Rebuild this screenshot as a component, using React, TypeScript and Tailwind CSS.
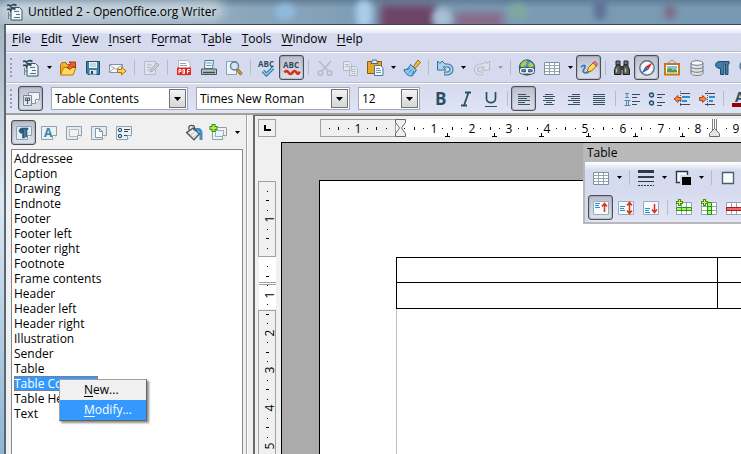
import type { ReactNode } from 'react'
import clsx from 'clsx'

const icons: Record<string, ReactNode> = {
  writer: (
    <>
      <path d="M5 4.500h8.500L16 7v10H5z" fill="#f4f8fb" stroke="#35566d" />
      <path d="M8 8.500h5M8 14.500h6M10 11.500h4" stroke="#4d6e85" />
      <path d="M1 2.500c2-1 3 0 3.500 1C5.500 1.500 8 1 10.500 2.500M1 6.500c2-1 3 0 3.500 1 .5-2 3-2.500 5-1" fill="none" stroke="#2b4658" strokeWidth="1.600" />
      <path d="M2.500 9v7M2 12h4" stroke="#6d8798" />
    </>
  ),
  folder: (
    <>
      <path d="M1.500 15V5.500l1.500-2h4l1 2h7V8" fill="#f0b22c" stroke="#b06a10" />
      <path d="M1.500 16 4.500 8.500H17L14 16z" fill="#ffd95c" stroke="#b8730c" />
      <path d="M8 8.500 12 5 10 3h6.500v6L14.500 7 11 10.500z" fill="#e8652c" stroke="#8c2606" strokeWidth=".8" />
    </>
  ),
  save: (
    <>
      <path d="M2.500 2.500h13v13H4L2.500 14z" fill="#3c82a8" stroke="#1f4964" />
      <path d="M5 3h8v6H5z" fill="#e9f2f7" />
      <path d="M6 5h6M6 7h6" stroke="#9db9c8" />
      <path d="M5.500 11h7v4.500h-7z" fill="#d8e0e5" />
      <path d="M7 12h2v3H7z" fill="#25465b" />
    </>
  ),
  mail: (
    <>
      <path d="M.5 5.500h13v8H.5z" fill="#f7f9fa" stroke="#8494a0" />
      <path d="m1 6 6 4.500L13 6M1 13l4-4M13 13l-4-4" fill="none" stroke="#9aa8b2" />
      <path d="M8.500 10.500h4v-2.500l4.500 4-4.500 4v-2.500h-4z" fill="#ffd257" stroke="#b4700e" />
    </>
  ),
  edit: (
    <>
      <path d="M2.500 2.500h11v13h-11z" fill="#dde2ee" stroke="#b5bcc8" />
      <path d="M5 6h5M5 8.500h4M5 11h3" stroke="#b5bcc8" />
      <path d="m8 13 1-3 6-6 2 2-6 6z" fill="#c6ccd6" stroke="#a8b0bc" />
    </>
  ),
  pdf: (
    <>
      <path d="M3.500 1.500h9l2.500 3V16H3.500z" fill="#fff" stroke="#b0bac2" />
      <path d="M5 4.500h6M5 6.500h7" stroke="#8ea4b2" />
      <path d="M2 8.500h14v7.500H2z" fill="#e02a20" />
      <path d="M4 14.500v-4h2v2H4M8 10.500v4h1.500v-4zM12.500 14.500v-4H15M12.500 12.500h2" fill="none" stroke="#fff" />
    </>
  ),
  printer: (
    <>
      <path d="M5 1.500h8.500l-1 8h-8z" fill="#eef6fb" stroke="#56798f" />
      <path d="M6.500 4h5M6.500 6.500h5" stroke="#5aa4d0" />
      <path d="M1.500 10h15v5.500h-15z" fill="#b9c4ca" stroke="#46545e" />
      <path d="M3 13.500h12" stroke="#3d4850" strokeWidth="1.500" />
      <path d="M13 11.500h2" stroke="#58d447" />
    </>
  ),
  preview: (
    <>
      <path d="M1.500 2.500h10v13h-10z" fill="#eef4f8" stroke="#8aa0b0" />
      <circle cx="9.500" cy="7" r="4" fill="#cfe7f6" stroke="#5f7f95" strokeWidth="1.400" />
      <path d="m12.500 10.500 4 5" stroke="#7d5a14" strokeWidth="3" />
      <path d="m12.500 10.500 4 5" stroke="#d9a83a" strokeWidth="1.500" />
    </>
  ),
  abcCheck: (
    <>
      <text x="0" y="8" className="text-[8px] font-bold" fill="#2f4c60">ABC</text>
      <path d="m5 12 3.500 3.500L15 9" fill="none" stroke="#2c6f9c" strokeWidth="3.500" />
      <path d="m5 12 3.500 3.500L15 9" fill="none" stroke="#8fd2f4" strokeWidth="1.500" />
    </>
  ),
  abcWave: (
    <>
      <text x="0" y="9" className="text-[8px] font-bold" fill="#2f4c60">ABC</text>
      <path d="M1.500 13.500q2-3 4 0t4 0 4 0 3-1" fill="none" stroke="#e02a18" strokeWidth="2.600" />
    </>
  ),
  cut: (
    <g fill="none" stroke="#b5bbc6">
      <path d="m3 2 9 10M15 2 6 12" strokeWidth="1.600" />
      <circle cx="4.500" cy="14" r="2.200" strokeWidth="1.500" />
      <circle cx="13.500" cy="14" r="2.200" strokeWidth="1.500" />
    </g>
  ),
  copy: (
    <g fill="#e3e7f1" stroke="#b5bbc6">
      <path d="M2.500 2.500h6l2 2v7h-8zM8.500 7.500h6l2 2v7h-8z" />
      <path d="M4 5.500h4M4 7.500h4M10.500 10.500h4M10.500 12.500h4M10.500 14.500h4" />
    </g>
  ),
  paste: (
    <>
      <path d="M1.500 2.500h14v12h-14z" fill="#e3a92c" stroke="#8a5f10" />
      <path d="M5 4.500h7L10.500 1h-4z" fill="#dfe5e9" stroke="#5b6870" />
      <path d="M8.500 6.500h6l2.500 2.500v7.500H8.500z" fill="#f3f9fc" stroke="#55788e" />
      <path d="M10 9.500h4M10 11.500h5M10 13.500h5" stroke="#6f9fbd" />
    </>
  ),
  brush: (
    <>
      <path d="m10.500 7.500 4.500-6.500 2.500 2.500-5.500 6z" fill="#f0bd3c" stroke="#9a6c14" />
      <path d="M7.500 5.500 13.500 11 9 17c-4 0-7-2.500-8-6.500 2.500.5 5-1.500 6.500-5z" fill="#8cc9ee" stroke="#286694" />
      <path d="m4 11 3-2M6 13.500l3-3M9 15l2-3" stroke="#286694" strokeWidth=".8" />
    </>
  ),
  undo: (
    <>
      <path d="M5 6.500h6.500a3.500 3.500 0 0 1 0 8H8" fill="none" stroke="#3a6f94" strokeWidth="4" />
      <path d="M1.500 2v9h8.500L7 8l2.500-2.500L6 2 4 4.500z" fill="#a9d5ee" stroke="#3a6f94" />
      <path d="M5 6.500h6.500a3.500 3.500 0 0 1 0 8H8.500" fill="none" stroke="#a9d5ee" strokeWidth="2" />
    </>
  ),
  redo: (
    <>
      <path d="M13 6.500H7a3.500 3.500 0 0 0 0 8h2.500" fill="none" stroke="#b2b9c5" strokeWidth="4" />
      <path d="M16.500 2v9H9l2.500-3L9.500 5.500 12.500 2.500l1.500 2z" fill="#dde2ec" stroke="#b2b9c5" />
      <path d="M13 6.500H7a3.500 3.500 0 0 0 0 8h2" fill="none" stroke="#dde2ec" strokeWidth="2" />
    </>
  ),
  globe: (
    <>
      <circle cx="9" cy="8.500" r="7.600" fill="#4a92c4" stroke="#1d4d72" />
      <path d="M2.500 6c1-3 4-5 6.500-4.500L8 6l-4 2.500zM10 5l3-2 3 4-4 2.500z" fill="#b5cc3c" />
      <rect x="2.500" y="9.500" width="7" height="4.500" rx="2.200" fill="none" stroke="#27414f" strokeWidth="3" />
      <rect x="8.500" y="9.500" width="7" height="4.500" rx="2.200" fill="none" stroke="#27414f" strokeWidth="3" />
      <rect x="2.500" y="9.500" width="7" height="4.500" rx="2.200" fill="none" stroke="#eef3f5" strokeWidth="1.500" />
      <rect x="8.500" y="9.500" width="7" height="4.500" rx="2.200" fill="none" stroke="#eef3f5" strokeWidth="1.500" />
    </>
  ),
  table: (
    <>
      <path d="M1.500 3.500h15v12h-15z" fill="#fff" stroke="#7d909d" />
      <path d="M2 6.500h14M2 9.500h14M2 12.500h14M6.500 4v11M11.500 4v11" stroke="#96a6b1" />
    </>
  ),
  draw: (
    <>
      <path d="M1 8c4-3 5-1 3 2s0 5 5 3" fill="none" stroke="#2f7cc0" strokeWidth="1.800" />
      <path d="m7 13 1.500-4.500 5-5 3.500 3-5.500 5.500z" fill="#ffd95c" stroke="#97610e" />
      <path d="m13 4 1.500-2 3 3L16 7z" fill="#e8838a" stroke="#9a3038" strokeWidth=".7" />
    </>
  ),
  find: (
    <>
      <path d="M3 2h4v4H3zM11 2h4v4h-4z" fill="#73736d" stroke="#262624" />
      <path d="M1.500 15.500v-5L3.500 6H7l1 3v6.500zM16.500 15.500v-5L14.500 6H11l-1 3v6.500z" fill="#5b5b56" stroke="#1f1f1d" />
      <path d="M7.500 7h3v4h-3z" fill="#3c3c38" />
      <path d="M3.500 9.500v4M12.500 9.500v4" stroke="#b9b9b0" strokeWidth="1.500" />
    </>
  ),
  compass: (
    <>
      <circle cx="9" cy="9" r="7.200" fill="#fbfdff" stroke="#5d7282" strokeWidth="1.400" />
      <circle cx="9" cy="9" r="5.500" fill="none" stroke="#b5c5cf" strokeDasharray="1 2" />
      <path d="M14.500 3.500 10.500 10.500 7.500 7.500z" fill="#e02a20" />
      <path d="M3.500 14.500 7.500 7.500l3 3z" fill="#2c66b4" />
    </>
  ),
  gallery: (
    <>
      <path d="m5 4 4-3 4 3" fill="none" stroke="#8d9299" />
      <path d="M2 5h14v10.500H2z" fill="#fff" stroke="#c77a14" strokeWidth="2" />
      <path d="M4 7h10v3.500H4z" fill="#7cc3ef" />
      <path d="M4 13.500v-3l3-1.500 3 2 2-1 2 1.500v2z" fill="#5e9a34" />
    </>
  ),
  database: (
    <>
      <path d="M3 4v10c0 1.500 2.500 2.500 6 2.500s6-1 6-2.500V4z" fill="#dfe3e6" stroke="#6f7a83" />
      <ellipse cx="9" cy="4" rx="6" ry="2.300" fill="#fafbfb" stroke="#6f7a83" />
      <path d="M3 7.500c0 3 12 3 12 0M3 11c0 3 12 3 12 0" fill="none" stroke="#6f7a83" />
    </>
  ),
  pilcrow: (
    <path d="M7.500 15.500v-6C1 9.500 1 2.500 7 2.500h9v2.500h-1v10.500h-2.500V5h-1.500v10.500z" fill="#3f7ea6" stroke="#1f4a67" />
  ),
  zoom: (
    <circle cx="7" cy="7" r="5" fill="#d4e9f5" stroke="#50728a" strokeWidth="1.500" />
  ),
  styles: (
    <>
      <path d="M6.500 2.500h11v7l-4 4h-7z" fill="#eef2f5" stroke="#8496a3" />
      <path d="M17.500 9.500h-4v4" fill="#fff" stroke="#8496a3" />
      <path d="M1.500 5.500h8v10h-8z" fill="#e4e9ed" stroke="#7a8995" />
      <path d="M3.500 8v2.500h4V8zM5.500 8v6" fill="none" stroke="#4c5f6d" strokeWidth="1.200" />
    </>
  ),
  bold: <text x="3" y="15" className="text-[17px] font-bold" fill="#2c4f66">B</text>,
  italic: <path d="M8 2.500h6M4 15.500h6M11.500 2.500 7 15.500" fill="none" stroke="#2c4f66" strokeWidth="1.800" />,
  underline: (
    <>
      <path d="M4.500 2v6.500c0 5.500 9 5.500 9 0V2" fill="none" stroke="#2c4f66" strokeWidth="1.700" />
      <path d="M3 16.500h12" stroke="#2c4f66" />
    </>
  ),
  alignLeft: <path d="M3 4.500h8M3 6.500h12M3 8.500h9M3 10.500h12M3 12.500h7M3 14.500h12" stroke="#3b5163" />,
  alignCenter: <path d="M5 4.500h8M3 6.500h12M5 8.500h8M3 10.500h12M6 12.500h6M4 14.500h10" stroke="#3b5163" />,
  alignRight: <path d="M7 4.500h8M3 6.500h12M6 8.500h9M3 10.500h12M8 12.500h7M3 14.500h12" stroke="#3b5163" />,
  justify: <path d="M3 4.500h12M3 6.500h12M3 8.500h12M3 10.500h12M3 12.500h12M3 14.500h12" stroke="#3b5163" />,
  numbering: (
    <>
      <path d="M2 3.500h4M4 3.500v4M2 7.500h4M1.500 10.500h6M1.500 15.500h6M3.500 10.500v5M5.500 10.500v5" stroke="#5389a8" />
      <path d="M9 4.500h8M9 7.500h5M9 11.500h8M9 14.500h5" stroke="#3b4a56" />
    </>
  ),
  bullets: (
    <>
      <circle cx="3.500" cy="5" r="2" fill="#b7d8ea" stroke="#1f4a67" strokeWidth="1.300" />
      <circle cx="3.500" cy="13" r="2" fill="#b7d8ea" stroke="#1f4a67" strokeWidth="1.300" />
      <path d="M9 4.500h8M9 7.500h5M9 12.500h8M9 15.500h5" stroke="#3b4a56" />
    </>
  ),
  outdent: (
    <>
      <path d="M7 3.500h10M7 14.500h10" stroke="#3b4a56" />
      <path d="M7.500 1v16" stroke="#59666f" strokeDasharray="1 1" />
      <path d="M9 7h8M9 11h5" stroke="#2a8fd0" strokeWidth="2" />
      <path d="M1 9l4-3.500v2h3v3H5v2z" fill="#f5893c" stroke="#a8370a" strokeWidth=".9" />
    </>
  ),
  indent: (
    <>
      <path d="M7 3.500h10M7 14.500h10" stroke="#3b4a56" />
      <path d="M9.500 1v16" stroke="#59666f" strokeDasharray="1 1" />
      <path d="M11 7h6M11 11h4" stroke="#2a8fd0" strokeWidth="2" />
      <path d="M8.500 9l-4-3.500v2h-3v3h3v2z" fill="#f5893c" stroke="#a8370a" strokeWidth=".9" />
    </>
  ),
  fontColor: (
    <>
      <text x="4" y="12" className="text-[14px] font-bold" fill="#2c4f66">A</text>
      <path d="M1 13h16v4H1z" fill="#990000" />
    </>
  ),
  paraStyle: (
    <>
      <path d="M1.500 2.500h15v9l-4 4h-11z" fill="#e2edf4" stroke="#8ca2b1" />
      <path d="M16.500 11.500h-4v4" fill="#fff" stroke="#8ca2b1" />
      <path d="M7.500 14V9.500C3 9.500 3 4 7.500 4H13v1.500h-1V13h-1.500V5.500h-1V14z" fill="#2c5a78" stroke="#2c5a78" strokeWidth=".6" />
    </>
  ),
  charStyle: (
    <>
      <path d="M1.500 2.500h15v9l-4 4h-11z" fill="#eaf1f5" stroke="#8ca2b1" />
      <path d="M16.500 11.500h-4v4" fill="#fff" stroke="#8ca2b1" />
      <text x="4" y="13" className="text-[12px] font-bold" fill="#3f7ea6">A</text>
    </>
  ),
  frameStyle: (
    <>
      <path d="M1.500 2.500h15v9l-4 4h-11z" fill="#e6ebef" stroke="#8ca2b1" />
      <path d="M4.500 5.500h9v7h-9z" fill="#f3f3f1" stroke="#b9b8ac" />
      <path d="M16.500 11.500h-4v4" fill="#fff" stroke="#8ca2b1" />
    </>
  ),
  pageStyle: (
    <>
      <path d="M1.500 2.500h15v9l-4 4h-11z" fill="#e6ebef" stroke="#8ca2b1" />
      <path d="M5.500 4.500h4l3 3v6h-7zM9.500 4.500v3h3" fill="#fdfdfd" stroke="#8496a3" />
      <path d="M16.500 11.500h-4v4" fill="#fff" stroke="#8ca2b1" />
    </>
  ),
  listStyle: (
    <>
      <path d="M1.500 2.500h15v9l-4 4h-11z" fill="#eaf1f5" stroke="#8ca2b1" />
      <circle cx="5" cy="6" r="1.700" fill="#b7d8ea" stroke="#1f4a67" />
      <circle cx="5" cy="12" r="1.700" fill="#b7d8ea" stroke="#1f4a67" />
      <path d="M9 5.500h6M9 7.500h4M9 11.500h5" stroke="#3b4a56" />
      <path d="M16.500 11.500h-4v4" fill="#fff" stroke="#8ca2b1" />
    </>
  ),
  fill: (
    <>
      <path d="M10 5.500h3c2 0 3 1.500 3 4V16" fill="none" stroke="#3c8fc8" strokeWidth="3" />
      <path d="m1.500 8.500 6.500-4.500 6.500 6-5.500 6z" fill="#d0d4d7" stroke="#46525a" strokeWidth="1.200" />
      <path d="m5 9.500 4-3M7.500 12l4-3.500" stroke="#fff" strokeWidth="1.500" />
      <path d="M4.500 6.500c-2-3 0-5.500 2.500-5 3 0 3 2.500 2 5" fill="none" stroke="#46525a" strokeWidth="1.300" />
    </>
  ),
  newStyle: (
    <>
      <path d="M2.500 3.500h14v8l-4 4h-10z" fill="#eef3f6" stroke="#8ca2b1" />
      <path d="M5.500 6.500h8v6h-8z" fill="none" stroke="#3a6f94" strokeDasharray="1 1" />
      <path d="M16.500 11.500h-4v4" fill="#fff" stroke="#8ca2b1" />
      <path d="M3.500 0v8M-.5 4h8" stroke="#3f8f0c" strokeWidth="4" />
      <path d="M3.500 1v6M.5 4h6" stroke="#a8ee4c" strokeWidth="2" />
    </>
  ),
  lines: (
    <>
      <path d="M1 2.500h16" stroke="#2c3a46" strokeWidth="3" />
      <path d="M1 8h16" stroke="#2c3a46" strokeWidth="2" />
      <path d="M1 12.500h16" stroke="#2c3a46" />
      <path d="M1 16.500h16" stroke="#2c3a46" strokeDasharray="2 1" />
    </>
  ),
  lineColor: (
    <>
      <path d="M2.500 2.500h11v11h-11z" fill="#f5f7fc" stroke="#2c3a46" strokeWidth="1.400" />
      <path d="M6 6h12v12H6z" fill="#d3daee" />
      <path d="M8 8h9v8H8z" fill="#000" />
    </>
  ),
  borders: <path d="M3.500 3.500h11v11h-11z" fill="#fafbfd" stroke="#4c5f6d" strokeWidth="1.300" />,
  alignTop: (
    <>
      <path d="M1.500 2.500h15v13h-15z" fill="#f6fafc" stroke="#9aacb8" />
      <path d="M3 4.500h5M3 6.500h4M3 8.500h5" stroke="#2a8fd0" />
      <path d="M12.500 13V5M10 7.500l2.500-3 2.500 3" fill="none" stroke="#d8301c" strokeWidth="1.500" />
    </>
  ),
  alignMiddle: (
    <>
      <path d="M1.500 2.500h15v13h-15z" fill="#f6fafc" stroke="#9aacb8" />
      <path d="M3 7.500h5M3 9.500h4M3 11.500h5" stroke="#2a8fd0" />
      <path d="M12.500 14V4M10 6.500l2.500-3 2.500 3M10 11.500l2.500 3 2.500-3" fill="none" stroke="#d8301c" strokeWidth="1.500" />
    </>
  ),
  alignBottom: (
    <>
      <path d="M1.500 2.500h15v13h-15z" fill="#f6fafc" stroke="#9aacb8" />
      <path d="M3 9.500h5M3 11.500h4M3 13.500h5" stroke="#2a8fd0" />
      <path d="M12.500 5v8M10 10.500l2.500 3 2.500-3" fill="none" stroke="#d8301c" strokeWidth="1.500" />
    </>
  ),
  insertRow: (
    <>
      <path d="M1.500 3.500h15v12h-15zM6.500 4v11M11.500 4v11" fill="#fff" stroke="#93a3ae" />
      <path d="M1.500 8.500h15v3h-15zM6.500 8.500v3M11.500 8.500v3" fill="#b4f06a" stroke="#1f9a14" />
      <path d="M4.500 0v7M1 3.500h7" stroke="#4a8a0c" strokeWidth="3" />
      <path d="M4.500 1v5M2 3.500h5" stroke="#c4f67c" />
    </>
  ),
  insertCol: (
    <>
      <path d="M1.500 3.500h15v12h-15zM2 7.500h14M2 11.500h14" fill="#fff" stroke="#93a3ae" />
      <path d="M7.500 3.500h4v12h-4zM7.500 7.500h4M7.500 11.500h4" fill="#b4f06a" stroke="#1f9a14" />
      <path d="M4.500 0v7M1 3.500h7" stroke="#4a8a0c" strokeWidth="3" />
      <path d="M4.500 1v5M2 3.500h5" stroke="#c4f67c" />
    </>
  ),
  deleteRow: (
    <>
      <path d="M1.500 3.500h15v12h-15zM6.500 4v11M11.500 4v11" fill="#fff" stroke="#93a3ae" />
      <path d="M1.500 8.500h15v3h-15z" fill="#f06a6a" stroke="#b01818" />
    </>
  ),
}

function Icon({ name }: { name: string }) {
  return (
    <svg className="h-[18px] w-[18px] shrink-0 overflow-visible" viewBox="0 0 18 18" aria-hidden="true">
      {icons[name]}
    </svg>
  )
}

function ToolButton({ icon, label, pressed = false }: { icon: string; label: string; pressed?: boolean }) {
  return (
    <button
      type="button"
      aria-label={label}
      aria-pressed={pressed}
      className={clsx(
        'flex h-[25px] w-[25px] shrink-0 items-center justify-center rounded-[3px] border',
        pressed
          ? 'border-[#4a4d5a] bg-linear-to-b from-[#bcc0cc] to-[#dfe3ee] shadow-[inset_0_0_2px_#6b6e7a]'
          : 'border-transparent'
      )}
    >
      <Icon name={icon} />
    </button>
  )
}

function Arrow({ label, muted = false }: { label: string; muted?: boolean }) {
  return (
    <button type="button" aria-label={label} className="flex h-[25px] w-3 shrink-0 items-center justify-center">
      <svg className={clsx('h-[3px] w-[5px]', muted ? 'text-[#9a9ea8]' : 'text-black')} viewBox="0 0 5 3" aria-hidden="true">
        <path d="M0 0h5L2.500 3z" fill="currentColor" />
      </svg>
    </button>
  )
}

function Separator() {
  return (
    <div className="flex w-2 shrink-0 justify-center">
      <div className="h-[15px] w-px bg-[#b9bbc2]" />
    </div>
  )
}

function Grip() {
  return <div className="mr-1.5 ml-1 h-[19px] w-0 shrink-0 border-l-2 border-dotted border-[#9a9eac]" />
}

function Combo({ label, value, className }: { label: string; value: string; className: string }) {
  return (
    <div className={clsx('relative mr-2 flex h-[23px] shrink-0 items-center border border-[#a5a8b0] bg-white', className)}>
      <select aria-label={label} defaultValue={value} className="h-full w-full appearance-none bg-transparent pl-[3px] text-[12px] text-black outline-none">
        <option>{value}</option>
      </select>
      <span className="pointer-events-none absolute top-px right-px flex h-[19px] w-[17px] items-center justify-center border border-[#70737a] bg-linear-to-b from-[#f4f4f4] to-[#d6d6d6]">
        <svg className="h-1 w-[7px]" viewBox="0 0 7 4" aria-hidden="true">
          <path d="M0 0h7L3.500 4z" />
        </svg>
      </span>
    </div>
  )
}

const menus = [
  ['', 'F', 'ile'],
  ['', 'E', 'dit'],
  ['', 'V', 'iew'],
  ['', 'I', 'nsert'],
  ['F', 'o', 'rmat'],
  ['T', 'a', 'ble'],
  ['', 'T', 'ools'],
  ['', 'W', 'indow'],
  ['', 'H', 'elp'],
]

function TitleBar() {
  return (
    <div className="relative flex h-6 shrink-0 items-center overflow-hidden">
      <div className="absolute inset-0 bg-linear-to-r from-[#a9bac6] via-[#7d9db6] to-[#7899b3]" />
      <div className="absolute inset-x-0 top-0 h-2 bg-linear-to-b from-[#55728a]/70 to-transparent" />
      <div className="absolute top-1 left-[380px] h-8 w-14 bg-[#6d4468] blur-[4px]" />
      <div className="absolute top-3 left-[455px] h-5 w-12 bg-[#8a5f80]/80 blur-[4px]" />
      <div className="absolute top-0 left-[356px] h-7 w-4 rounded-full bg-[#a9cdea] blur-[3px]" />
      <div className="absolute top-2 left-[432px] h-5 w-5 rounded-full bg-[#a8bfd4] blur-[3px]" />
      <div className="absolute top-1 left-[275px] h-4 w-5 rounded-full bg-[#8fbbe0] blur-[3px]" />
      <div className="absolute top-1 left-[508px] h-4 w-5 rounded-full bg-[#7fa8a0] blur-[3px]" />
      <div className="absolute top-0 left-[594px] h-5 w-3 rounded-full bg-[#5f6f98] blur-[3px]" />
      <div className="absolute top-1 left-[664px] h-4 w-3 rounded-full bg-[#7c6f86] blur-[3px]" />
      <div className="absolute top-0 left-0 h-5 w-56 rounded-full bg-[#d0dbe2]/80 blur-[6px]" />
      <div className="relative flex items-center gap-1 pl-1.5">
        <Icon name="writer" />
        <h1 className="text-[12px] leading-4 text-black">Untitled 2 - OpenOffice.org Writer</h1>
      </div>
    </div>
  )
}

function MenuBar() {
  return (
    <nav className="flex h-[27px] shrink-0 items-center border-b border-[#b9bac2] bg-linear-to-b from-white from-10% via-[#e6eaf6] via-30% to-[#d5daee] to-35% pt-0.5 pl-px">
      {menus.map(([pre, key, post]) => (
        <button key={pre + key + post} type="button" className="px-[5px] text-[12px] leading-4">
          {pre}
          <u className="decoration-1 underline-offset-2">{key}</u>
          {post}
        </button>
      ))}
    </nav>
  )
}

function StandardToolbar() {
  return (
    <div role="toolbar" aria-label="Standard" className="flex h-[31px] shrink-0 items-center border-t border-b border-t-white border-b-[#b9bac2] bg-[#d5daee]">
      <Grip />
      <ToolButton icon="writer" label="New" />
      <Arrow label="New document type" />
      <ToolButton icon="folder" label="Open" />
      <ToolButton icon="save" label="Save" />
      <ToolButton icon="mail" label="Document as E-mail" />
      <Separator />
      <ToolButton icon="edit" label="Edit File" />
      <Separator />
      <ToolButton icon="pdf" label="Export Directly as PDF" />
      <ToolButton icon="printer" label="Print File Directly" />
      <ToolButton icon="preview" label="Page Preview" />
      <Separator />
      <ToolButton icon="abcCheck" label="Spelling and Grammar" />
      <ToolButton icon="abcWave" label="AutoSpellcheck" pressed />
      <Separator />
      <ToolButton icon="cut" label="Cut" />
      <ToolButton icon="copy" label="Copy" />
      <ToolButton icon="paste" label="Paste" />
      <Arrow label="Paste options" />
      <ToolButton icon="brush" label="Format Paintbrush" />
      <Separator />
      <ToolButton icon="undo" label="Undo" />
      <Arrow label="Undo history" />
      <ToolButton icon="redo" label="Redo" />
      <Arrow label="Redo history" muted />
      <Separator />
      <ToolButton icon="globe" label="Hyperlink" />
      <ToolButton icon="table" label="Insert Table" />
      <Arrow label="Table size" />
      <ToolButton icon="draw" label="Show Draw Functions" pressed />
      <Separator />
      <ToolButton icon="find" label="Find and Replace" />
      <ToolButton icon="compass" label="Navigator" pressed />
      <ToolButton icon="gallery" label="Gallery" />
      <ToolButton icon="database" label="Data Sources" />
      <ToolButton icon="pilcrow" label="Nonprinting Characters" />
      <ToolButton icon="zoom" label="Zoom" />
    </div>
  )
}

function FormattingToolbar() {
  return (
    <div role="toolbar" aria-label="Formatting" className="flex h-8 shrink-0 items-center border-t border-b-2 border-t-white border-b-[#a0a0a0] bg-linear-to-b from-[#d5daee] to-[#dfe4f5]">
      <Grip />
      <ToolButton icon="styles" label="Styles and Formatting" pressed />
      <div className="w-2 shrink-0" />
      <Combo label="Apply Style" value="Table Contents" className="w-[137px]" />
      <Combo label="Font Name" value="Times New Roman" className="w-[154px]" />
      <Combo label="Font Size" value="12" className="w-[62px]" />
      <ToolButton icon="bold" label="Bold" />
      <ToolButton icon="italic" label="Italic" />
      <ToolButton icon="underline" label="Underline" />
      <Separator />
      <ToolButton icon="alignLeft" label="Align Left" pressed />
      <ToolButton icon="alignCenter" label="Centered" />
      <ToolButton icon="alignRight" label="Align Right" />
      <ToolButton icon="justify" label="Justified" />
      <Separator />
      <ToolButton icon="numbering" label="Numbering On/Off" />
      <ToolButton icon="bullets" label="Bullets On/Off" />
      <ToolButton icon="outdent" label="Decrease Indent" />
      <ToolButton icon="indent" label="Increase Indent" />
      <Separator />
      <ToolButton icon="fontColor" label="Font Color" />
    </div>
  )
}

const styleNames = [
  'Addressee',
  'Caption',
  'Drawing',
  'Endnote',
  'Footer',
  'Footer left',
  'Footer right',
  'Footnote',
  'Frame contents',
  'Header',
  'Header left',
  'Header right',
  'Illustration',
  'Sender',
  'Table',
  'Table Contents',
  'Table Heading',
  'Text',
]

function StylesPanel() {
  return (
    <aside className="flex w-[241px] shrink-0 flex-col border-r border-[#a0a0a0] bg-[#f0f0f0] pr-[3px] pl-[5px]">
      <div className="flex items-center pt-[5px] pb-1">
        <ToolButton icon="paraStyle" label="Paragraph Styles" pressed />
        <ToolButton icon="charStyle" label="Character Styles" />
        <ToolButton icon="frameStyle" label="Frame Styles" />
        <ToolButton icon="pageStyle" label="Page Styles" />
        <ToolButton icon="listStyle" label="List Styles" />
        <div className="grow" />
        <ToolButton icon="fill" label="Fill Format Mode" />
        <ToolButton icon="newStyle" label="New Style from Selection" />
        <Arrow label="Style actions" />
      </div>
      <div className="relative min-h-0 grow border border-b-0 border-[#828790] bg-white pt-px pl-0.5">
        <ul role="listbox" aria-label="Styles" className="flex flex-col items-start text-[12px] leading-[15px]">
          {styleNames.map((name) => {
            const selected = name === 'Table Contents'
            return (
              <li
                key={name}
                role="option"
                aria-selected={selected}
                className={clsx('h-[15px] whitespace-nowrap', selected && 'bg-[#3399ff] text-white outline-1 -outline-offset-1 outline-dotted outline-[#b86a20]')}
              >
                {name}
              </li>
            )
          })}
        </ul>
        <ContextMenu />
      </div>
    </aside>
  )
}

function ContextMenu() {
  return (
    <div role="menu" className="absolute top-[229px] left-[47px] flex w-[88px] flex-col border border-[#a0a0a0] border-r-[#646464] border-b-[#646464] bg-[#f0f0f0] text-[12px] leading-5 shadow-[2px_2px_2px_rgba(0,0,0,0.45)]">
      <button type="button" role="menuitem" className="h-5 pl-6 text-left text-black">
        <u className="decoration-1 underline-offset-2">N</u>ew...
      </button>
      <button type="button" role="menuitem" className="h-5 bg-[#3399ff] pl-6 text-left text-white">
        <u className="decoration-1 underline-offset-2">M</u>odify...
      </button>
    </div>
  )
}

const UNIT = 37.8

function rulerMarks(origin: number, from: number, to: number) {
  const marks: { pos: number; kind: number; value: number }[] = []
  for (let i = from; i <= to; i++) {
    const kind = ((i % 4) + 4) % 4
    if (i !== 0) marks.push({ pos: Math.round(origin + (i * UNIT) / 4), kind, value: Math.abs(i / 4) })
  }
  return marks
}

function HorizontalRuler() {
  return (
    <svg className="h-[19px] min-w-0 grow" role="img" aria-label="Horizontal ruler">
      <rect x="75" width="100%" height="18" fill="#fff" />
      <rect x=".5" y=".5" width="75" height="17" fill="#f0f0f0" stroke="#a0a0a0" />
      {rulerMarks(75, -7, 37).map(({ pos, kind, value }) =>
        kind === 0 ? (
          <text key={pos} x={pos + 1} y="14" textAnchor="middle" className="text-[12px]">
            {value}
          </text>
        ) : (
          <rect key={pos} x={pos} y={kind === 2 ? 8 : 9} width="1" height={kind === 2 ? 3 : 1} />
        )
      )}
      {[125, 172, 219, 266, 313, 360].map((x) => (
        <path key={x} d={`M${x} 17.500h5M${x + 2.5} 14v3`} stroke="#000" />
      ))}
      <path d="M75.500.5h10v3l-4 5.500 4 5.500v3h-10v-3l4-5.500-4-5.500z" fill="#f0f0f0" stroke="#696969" />
      <path d="M392.500 0v12M394.500 0v12M396.500 0v12" stroke="#808080" />
      <path d="M389.500 17.500v-3l5-5 5 5v3z" fill="#e4e4e4" stroke="#696969" />
    </svg>
  )
}

function VerticalRuler() {
  return (
    <svg className="w-[19px] grow" role="img" aria-label="Vertical ruler">
      <rect x=".5" y="39.500" width="17" height="75" fill="#f0f0f0" stroke="#a0a0a0" />
      <rect x="1" y="115" width="17" height="52" fill="#fff" />
      <path d="M1 140.500h17M1 142.500h17" stroke="#a0a0a0" />
      <rect x=".5" y="168.500" width="17" height="400" fill="#f0f0f0" stroke="#a0a0a0" />
      {rulerMarks(115, -7, 20).map(({ pos, kind, value }) =>
        kind === 0 ? (
          <text key={pos} transform={`translate(16 ${pos}) rotate(-90)`} textAnchor="middle" className="text-[12px]">
            {value}
          </text>
        ) : (
          <rect key={pos} x={kind === 2 ? 8 : 9} y={pos} width={kind === 2 ? 3 : 1} height="1" />
        )
      )}
    </svg>
  )
}

function TableToolbar() {
  return (
    <div role="toolbar" aria-label="Table" className="absolute top-0 left-[301px] w-[220px] border-2 border-[#b9b9b9] bg-white">
      <div className="h-[17px] bg-[#b9b9b9] pl-0.5 text-[12px] leading-4">Table</div>
      <div className="bg-linear-to-b from-white to-[#d5daee] to-15% pt-[3px] pl-[3px]">
        <div className="flex items-center">
          <ToolButton icon="table" label="Insert table" />
          <Arrow label="Table size" />
          <Separator />
          <ToolButton icon="lines" label="Line Style" />
          <Arrow label="Line styles" />
          <ToolButton icon="lineColor" label="Line Color" />
          <Arrow label="Line colors" />
          <Separator />
          <ToolButton icon="borders" label="Borders" />
          <Arrow label="Border styles" />
        </div>
        <div className="flex items-center bg-linear-to-b from-[#d5daee] to-[#e2e6f6] pt-[5px] pb-0.5">
          <ToolButton icon="alignTop" label="Top" pressed />
          <ToolButton icon="alignMiddle" label="Center (vertical)" />
          <ToolButton icon="alignBottom" label="Bottom" />
          <Separator />
          <ToolButton icon="insertRow" label="Insert Row" />
          <ToolButton icon="insertCol" label="Insert Column" />
          <ToolButton icon="deleteRow" label="Delete Row" />
        </div>
      </div>
    </div>
  )
}

function DocumentArea() {
  return (
    <main className="flex min-w-0 grow flex-col border-t border-l-2 border-[#696969] bg-[#f0f0f0] pt-[3px] pl-[3px]">
      <div className="flex shrink-0 gap-11 pb-1">
        <button type="button" aria-label="Tab type" className="flex h-[18px] w-[18px] shrink-0 items-center justify-center border border-[#a0a0a0]">
          <svg className="h-[6px] w-[7px]" viewBox="0 0 7 6" aria-hidden="true">
            <path d="M0 0h2v4h5v2H0z" />
          </svg>
        </button>
        <HorizontalRuler />
      </div>
      <div className="flex min-h-0 grow">
        <div className="flex w-[23px] shrink-0">
          <VerticalRuler />
        </div>
        <div className="relative min-w-0 grow overflow-hidden border-t border-l border-black bg-[#ababab] pt-[37px] pl-[37px]">
          <div className="h-full border-t border-l border-black bg-white pt-[76px] pl-[76px]">
            <div className="h-full w-[600px] border-l border-[#c0c0c0]">
              <table aria-label="Document table" className="-ml-px w-full table-fixed border-collapse">
                <colgroup>
                  <col className="w-[321px]" />
                  <col />
                </colgroup>
                <tbody>
                  <tr className="h-[25px]">
                    <td className="border border-black" />
                    <td className="border border-black" />
                  </tr>
                  <tr className="h-[26px]">
                    <td className="border border-black" />
                    <td className="border border-black" />
                  </tr>
                </tbody>
              </table>
            </div>
          </div>
          <TableToolbar />
        </div>
      </div>
    </main>
  )
}

export default function App() {
  return (
    <div className="flex h-screen flex-col overflow-hidden bg-[#a9bac6] font-['Open_Sans','Noto_Sans',sans-serif] text-black">
      <TitleBar />
      <div className="flex min-h-0 grow bg-linear-to-b from-[#a3b2bd] via-[#dce8f2] via-40% to-[#8fb4d4] pl-1">
        <div className="flex min-w-0 grow flex-col overflow-hidden border-t border-l-2 border-t-[#3c4650] border-l-[#5c6670]">
          <MenuBar />
          <StandardToolbar />
          <FormattingToolbar />
          <div className="flex min-h-0 grow">
            <StylesPanel />
            <div className="w-[6px] shrink-0 border-l border-white bg-[#f0f0f0]" />
            <DocumentArea />
          </div>
        </div>
      </div>
    </div>
  )
}
